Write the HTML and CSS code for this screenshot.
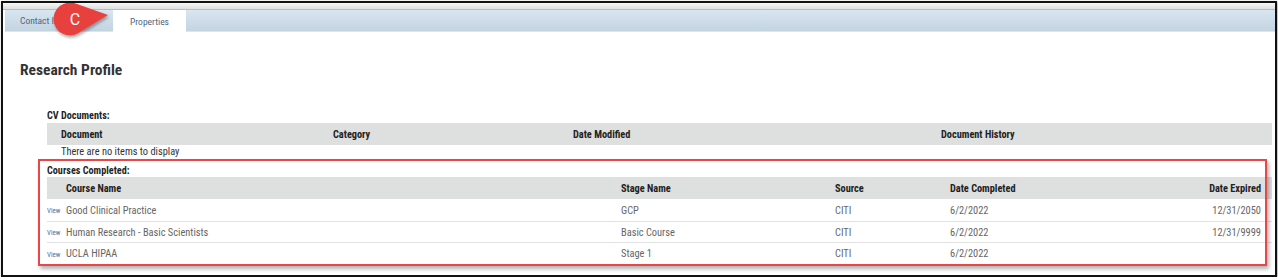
FILE: index.html
```html
<!DOCTYPE html>
<html>
<head>
<meta charset="utf-8">
<link rel="stylesheet" href="styles.css">
</head>
<body>
<div class="frame">
  <div class="topstrip"></div>
  <div class="tabbar">
    <div class="tab">Contact Info</div>
    <div class="tab active">Properties</div>
  </div>
  <svg class="badge" width="64" height="42" viewBox="0 0 64 42">
    <defs>
      <filter id="sh" x="-30%" y="-30%" width="160%" height="170%">
        <feDropShadow dx="1" dy="2" stdDeviation="1.6" flood-color="#000" flood-opacity="0.35"/>
      </filter>
    </defs>
    <path filter="url(#sh)" fill="#e8403e" d="M25.5 3.4 L58 15 L28.6 33.1 A16.5 16.5 0 1 1 25.5 3.4 Z"/>
    <text x="25" y="24.5" text-anchor="middle" class="badge-letter">C</text>
  </svg>

  <div class="content">
    <h1 class="title">Research Profile</h1>

    <section class="block">
      <div class="sec-title">CV Documents:</div>
      <div class="grid cv head">
        <div class="cell">Document</div>
        <div class="cell">Category</div>
        <div class="cell">Date Modified</div>
        <div class="cell">Document History</div>
      </div>
      <div class="empty">There are no items to display</div>
    </section>

    <section class="block courses">
      <div class="sec-title sec-courses">Courses Completed:</div>
      <div class="grid crs head">
        <div class="cell"></div>
        <div class="cell">Course Name</div>
        <div class="cell">Stage Name</div>
        <div class="cell">Source</div>
        <div class="cell">Date Completed</div>
        <div class="cell right">Date Expired</div>
      </div>
      <div class="grid crs row first">
        <div class="cell view">View</div>
        <div class="cell">Good Clinical Practice</div>
        <div class="cell">GCP</div>
        <div class="cell">CITI</div>
        <div class="cell">6/2/2022</div>
        <div class="cell right">12/31/2050</div>
      </div>
      <div class="grid crs row">
        <div class="cell view">View</div>
        <div class="cell">Human Research - Basic Scientists</div>
        <div class="cell">Basic Course</div>
        <div class="cell">CITI</div>
        <div class="cell">6/2/2022</div>
        <div class="cell right">12/31/9999</div>
      </div>
      <div class="grid crs row last">
        <div class="cell view">View</div>
        <div class="cell">UCLA HIPAA</div>
        <div class="cell">Stage 1</div>
        <div class="cell">CITI</div>
        <div class="cell">6/2/2022</div>
        <div class="cell right"></div>
      </div>
      <div class="highlight"></div>
    </section>
  </div>
</div>
</body>
</html>
```
FILE: styles.css
```css
html, body {
  margin: 0;
  padding: 0;
  background: #ffffff;
}
body {
  font-family: "Roboto Condensed", Roboto, "Liberation Sans", sans-serif;
  color: #333;
}
.frame {
  position: relative;
  margin: 1px 0 0 1px;
  width: 1272px;
  height: 272px;
  border: 2px solid #111;
  box-shadow: 1px 1px 3px rgba(0,0,0,0.35);
  background: #fff;
  overflow: hidden;
}
.topstrip {
  height: 6px;
  background: linear-gradient(#f7f7f7, #dedede);
  border-bottom: 1px solid #b9bcbf;
}
.tabbar {
  margin-left: 2px;
  height: 21px;
  background: linear-gradient(#d8e6f1, #c3d3e0);
  border-bottom: 1px solid #dbe6ef;
  display: flex;
  align-items: stretch;
}
.tab {
  font-size: 9.5px;
  color: #4d6684;
  display: flex;
  align-items: center;
  padding: 0 0 0 15px;
  width: 93px;
}
.tab.active {
  background: #fff;
  width: 73px;
  padding: 0;
  justify-content: center;
  margin-bottom: -1px;
}
.badge {
  position: absolute;
  left: 47px;
  top: -3px;
  overflow: visible;
}
.badge-letter {
  font-family: Roboto, "Liberation Sans", sans-serif;
  font-size: 16px;
  fill: #fff;
}
.content {
  padding: 0 3px 0 44px;
}
.title {
  margin: 28px 0 0 -27px;
  font-size: 15.5px;
  line-height: 20px;
  font-weight: 700;
  color: #333;
}
.block {
  position: relative;
}
.sec-title {
  font-size: 10.2px;
  font-weight: 700;
  color: #1f1f1f;
  line-height: 13px;
  padding-top: 29px;
  height: 14px;
  box-sizing: content-box;
}
.sec-courses {
  padding-top: 6px;
  height: 13px;
}
.grid {
  display: grid;
  align-items: center;
}
.grid.cv {
  grid-template-columns: 272px 240px 368px 1fr;
}
.grid.crs {
  grid-template-columns: 19px 555px 214px 115px 1fr 120px;
}
.head {
  height: 22px;
  background: #dedfdf;
  font-size: 10.3px;
  font-weight: 700;
  color: #222;
}
.grid.cv .cell {
  padding-left: 14px;
}
.right {
  text-align: right;
  padding-right: 11px;
}
.empty {
  height: 13px;
  line-height: 13px;
  font-size: 10.4px;
  padding-left: 14px;
  color: #333;
}
.row {
  height: 20px;
  border-bottom: 1px solid #e2e2e2;
  font-size: 10.4px;
  color: #666;
}
.row.first {
  height: 22px;
}
.row.last {
  height: 21px;
  border-bottom: none;
}
.view {
  font-size: 7px;
  color: #5a6a96;
  padding-top: 2px;
}
.highlight {
  position: absolute;
  left: -9px;
  top: 1px;
  width: 1225px;
  height: 103px;
  border: 2px solid #e8464b;
  box-shadow: 2px 3px 4px rgba(0,0,0,0.3);
  pointer-events: none;
}
```
